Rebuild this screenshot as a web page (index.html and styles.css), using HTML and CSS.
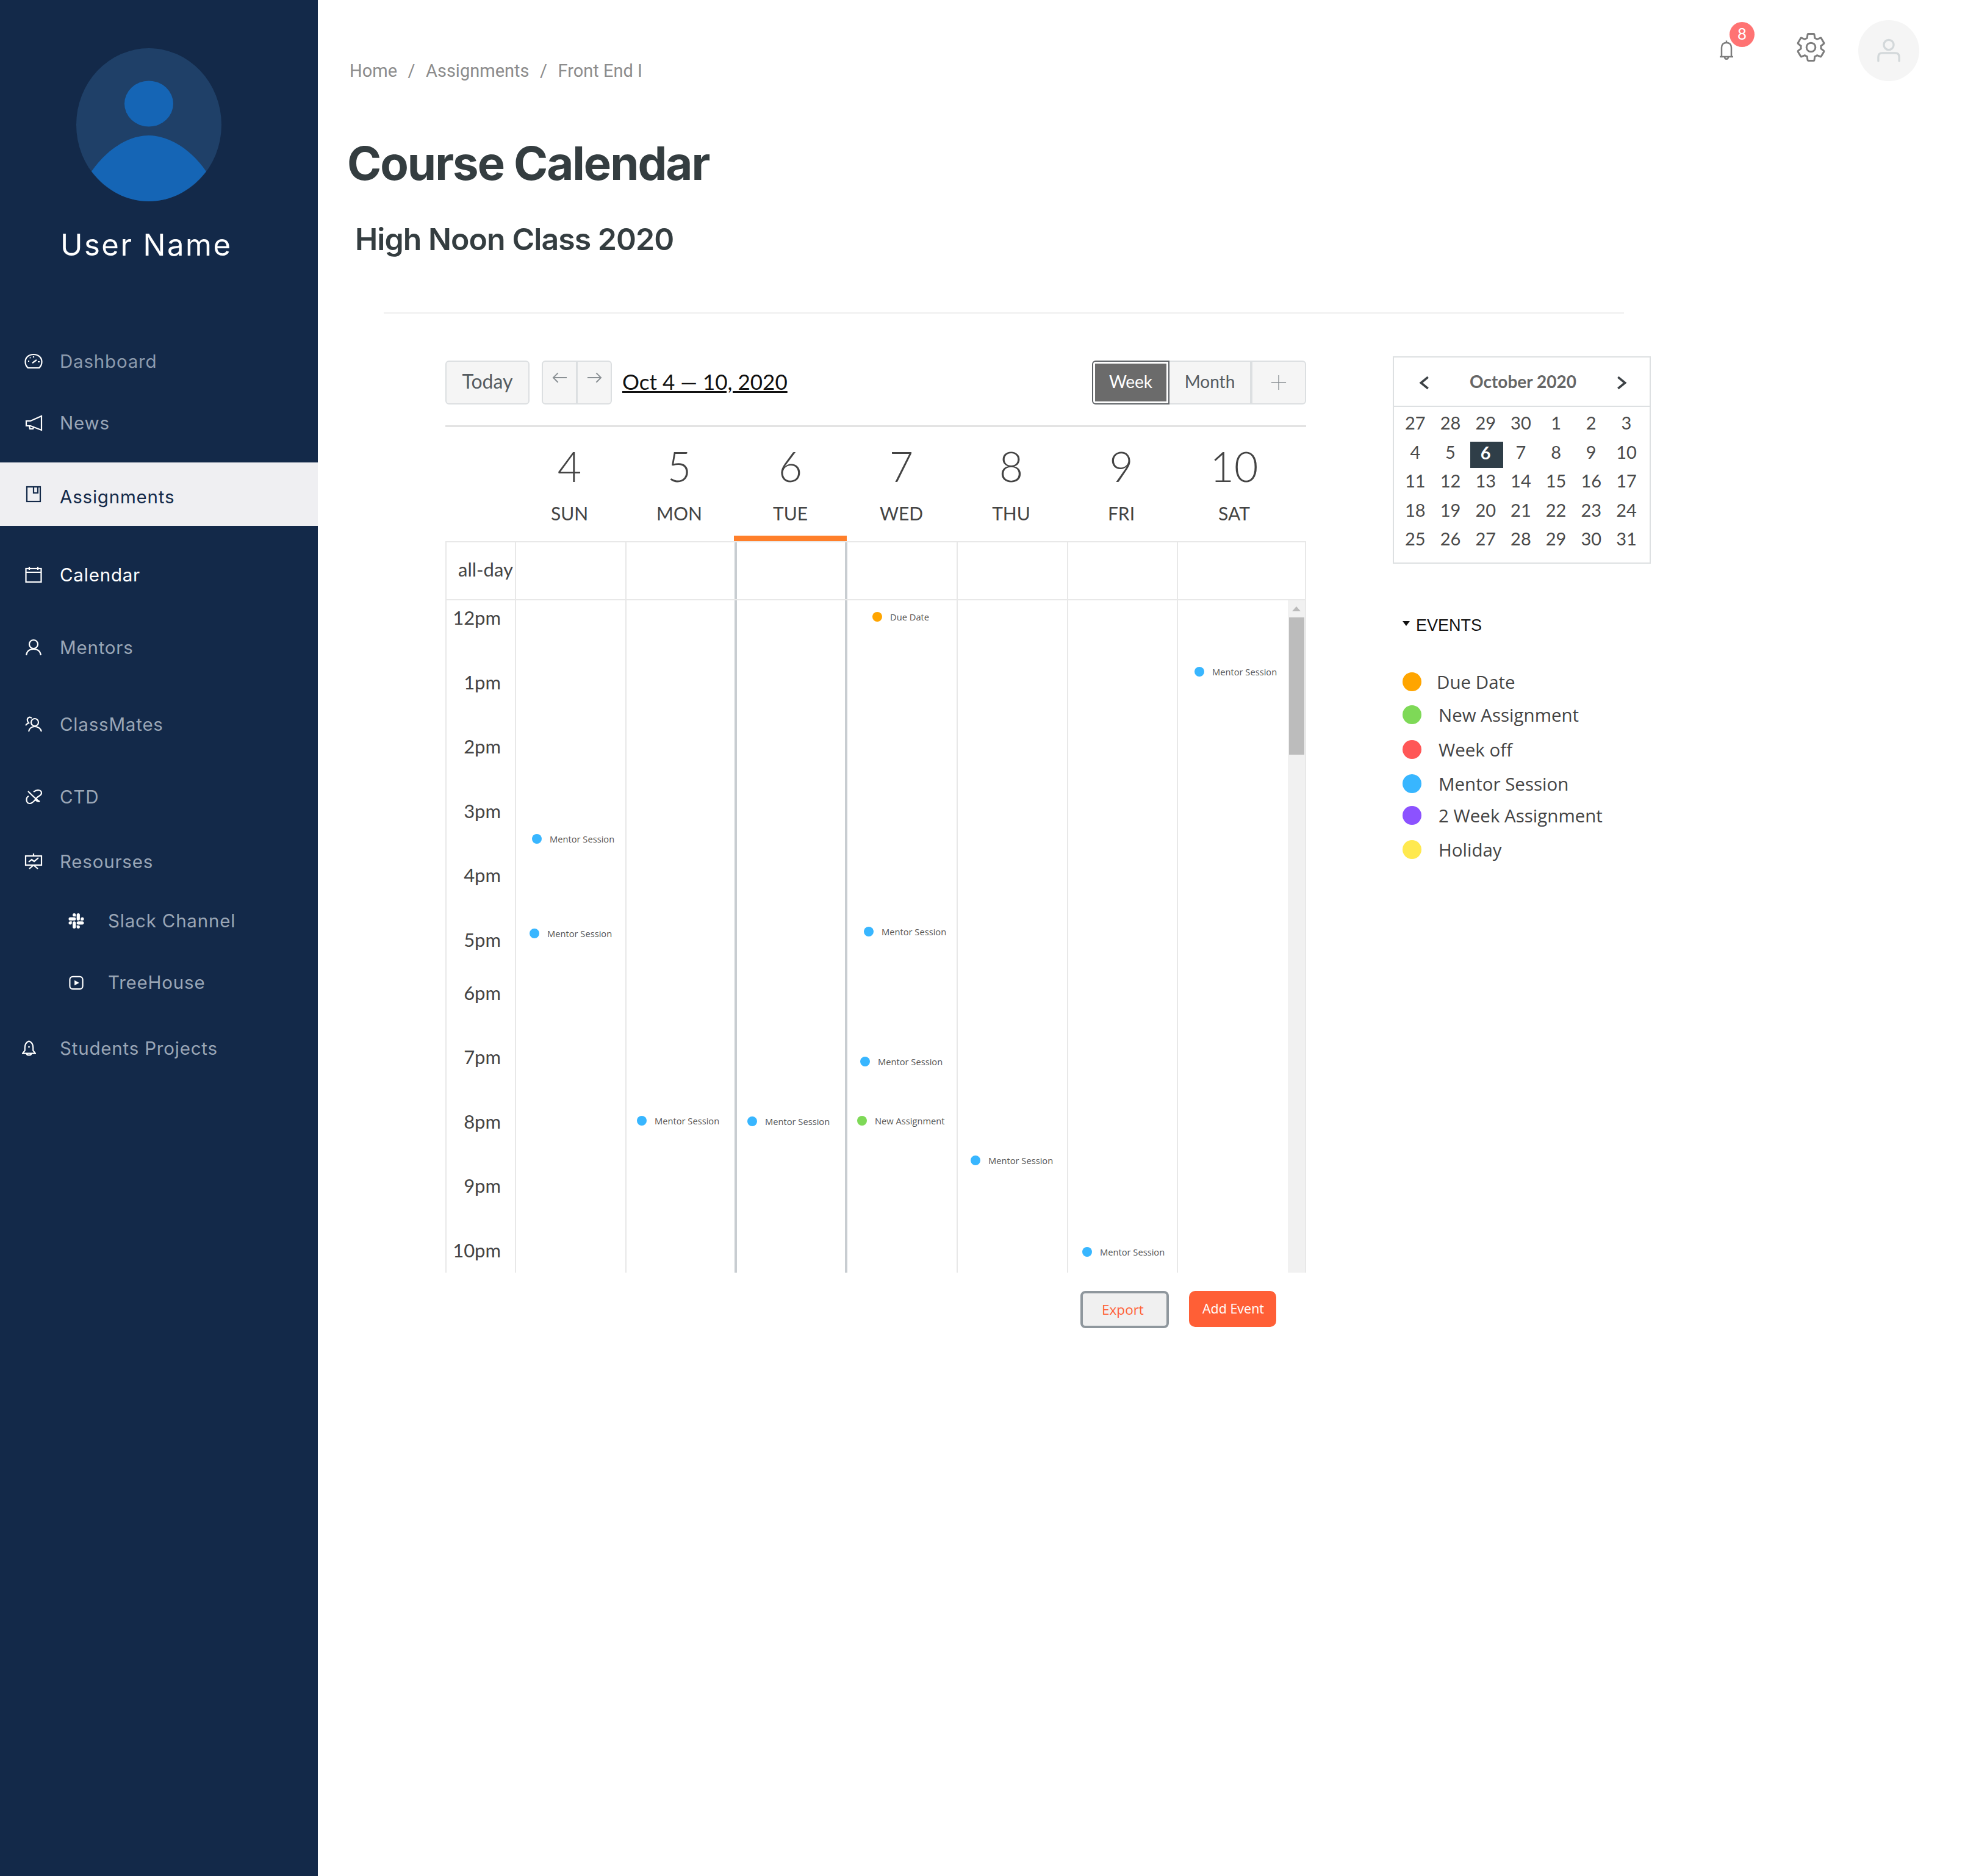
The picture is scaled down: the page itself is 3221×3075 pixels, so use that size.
FILE: index.html
```html
<!DOCTYPE html>
<html>
<head>
	<title>Course Calendar</title>
	<link rel="stylesheet" href="styles.css">
</head>
<body>
<div class="page">
	<aside class="sidebar">
		<svg class="avatar" viewBox="0 0 238 251">
			<ellipse cx="119" cy="125.5" rx="119" ry="125.5" fill="#1f4068"/>
			<ellipse cx="119" cy="91" rx="40" ry="37.5" fill="#1565b5"/>
			<path d="M25 202 C52 163 88 143 119 143 C150 143 186 163 213 202 C188 234 155 251 119 251 C83 251 50 234 25 202 Z" fill="#1565b5"/>
		</svg>
		<div class="user-name">User Name</div>
		<nav class="nav">
			<a class="nav-item nav-dim">
				<svg viewBox="0 0 30 28"><path d="M6 25 C2 22 1.500 18 1.500 15 C1.500 8 7 3 15 3 C23 3 28.500 8 28.500 15 C28.500 18 28 22 24 25 Z"/><path d="M13 17 L20 12 M6 14 H8 M22 15 H25 M9 8 L10 9 M15 6 V8"/></svg>
				<span>Dashboard</span>
			</a>
			<a class="nav-item">
				<svg viewBox="0 0 30 28"><path d="M28 3 V26 L10 19 H3 V11 H10 Z"/><path d="M8 19 L9 24 H14 L15 21"/></svg>
				<span>News</span>
			</a>
			<a class="nav-item nav-active">
				<svg viewBox="0 0 30 28"><rect x="4" y="2" width="22" height="24"/><path d="M15 2 V12 H22 V2"/></svg>
				<span>Assignments</span>
			</a>
			<a class="nav-item nav-white">
				<svg viewBox="0 0 30 28"><rect x="2.500" y="4" width="25" height="22"/><path d="M2.500 10 H27.500 M8 1 V6 M22 1 V6"/></svg>
				<span>Calendar</span>
			</a>
			<a class="nav-item">
				<svg viewBox="0 0 30 28"><circle cx="15" cy="9" r="7"/><path d="M3 27 C4 20 9 17 15 17 C21 17 26 20 27 27"/></svg>
				<span>Mentors</span>
			</a>
			<a class="nav-item">
				<svg viewBox="0 0 30 28"><circle cx="17" cy="11" r="6"/><path d="M7 26 C8 21 12 18 17 18 C22 18 27 21 28 26"/><path d="M12 4 C8 1 4 4 5 8 C5 10 6 11 7 12 C5 13 3 14 2 16"/></svg>
				<span>ClassMates</span>
			</a>
			<a class="nav-item">
				<svg viewBox="0 0 30 28"><path d="M7 13 C2 15 2 25 9 25 C14 25 17 19 21 15 C24 12 28 12 28 8 C28 2 20 2 15 6"/><path d="M6 5 C10 9 20 19 25 22"/><path d="M25 22 C22 22 20 21 18 19"/></svg>
				<span>CTD</span>
			</a>
			<a class="nav-item">
				<svg viewBox="0 0 30 28"><rect x="2" y="5" width="26" height="15"/><path d="M15 1 V5 M15 20 L8 26 M15 20 L22 26 M7 15 L12 11 L16 14 L23 8"/></svg>
				<span>Resourses</span>
			</a>
			<a class="nav-item nav-sub">
				<svg viewBox="0 0 24 24"><path class="solid" d="M5.042 15.165a2.528 2.528 0 0 1-2.52 2.523A2.528 2.528 0 0 1 0 15.165a2.527 2.527 0 0 1 2.522-2.52h2.52v2.52zM6.313 15.165a2.527 2.527 0 0 1 2.521-2.52 2.527 2.527 0 0 1 2.521 2.52v6.313A2.528 2.528 0 0 1 8.834 24a2.528 2.528 0 0 1-2.521-2.522v-6.313zM8.834 5.042a2.528 2.528 0 0 1-2.521-2.52A2.528 2.528 0 0 1 8.834 0a2.528 2.528 0 0 1 2.521 2.522v2.52H8.834zM8.834 6.313a2.528 2.528 0 0 1 2.521 2.521 2.528 2.528 0 0 1-2.521 2.521H2.522A2.528 2.528 0 0 1 0 8.834a2.528 2.528 0 0 1 2.522-2.521h6.312zM18.956 8.834a2.528 2.528 0 0 1 2.522-2.521A2.528 2.528 0 0 1 24 8.834a2.528 2.528 0 0 1-2.522 2.521h-2.522V8.834zM17.688 8.834a2.528 2.528 0 0 1-2.523 2.521 2.527 2.527 0 0 1-2.52-2.521V2.522A2.527 2.527 0 0 1 15.165 0a2.528 2.528 0 0 1 2.523 2.522v6.312zM15.165 18.956a2.528 2.528 0 0 1 2.523 2.522A2.528 2.528 0 0 1 15.165 24a2.527 2.527 0 0 1-2.52-2.522v-2.522h2.52zM15.165 17.688a2.527 2.527 0 0 1-2.52-2.523 2.526 2.526 0 0 1 2.52-2.52h6.313A2.527 2.527 0 0 1 24 15.165a2.528 2.528 0 0 1-2.522 2.523h-6.313z"/></svg>
				<span>Slack Channel</span>
			</a>
			<a class="nav-item nav-sub">
				<svg viewBox="0 0 26 26"><rect x="2" y="3" width="22" height="21" rx="5"/><path class="solid" d="M10 9 L18 13.500 L10 18 Z"/></svg>
				<span>TreeHouse</span>
			</a>
			<a class="nav-item nav-far">
				<svg viewBox="0 0 24 28"><path d="M12 2 C7 4 5 8 5 13 V18 L1 23 H23 L19 18 V13 C19 8 17 4 12 2 Z"/><circle class="solid" cx="12" cy="12" r="1.500"/><path d="M8 23 C8 27 16 27 16 23"/></svg>
				<span>Students Projects</span>
			</a>
		</nav>
	</aside>

	<main class="main">
		<header class="topbar">
			<div class="breadcrumb">
				<span>Home</span><span class="crumb-sep">/</span><span>Assignments</span><span class="crumb-sep">/</span><span>Front End I</span>
			</div>
			<div class="top-actions">
				<div class="bell">
					<svg viewBox="0 0 26 34"><path d="M2 28 H24 M5 28 V13 C5 8 8 5 13 5 C18 5 21 8 21 13 V28 M13 1.500 V5 M10 28 C10 33 16 33 16 28"/></svg>
					<span class="badge">8</span>
				</div>
				<svg class="gear" viewBox="0 0 24 24"><path d="M19.140 12.940c.04-.3.06-.61.06-.94 0-.32-.02-.64-.07-.94l2.030-1.580c.18-.14.23-.41.12-.61l-1.920-3.320c-.12-.22-.37-.29-.59-.22l-2.390.96c-.5-.38-1.030-.7-1.620-.94l-.36-2.540c-.04-.24-.24-.41-.48-.41h-3.840c-.24 0-.43.17-.47.41l-.36 2.540c-.59.24-1.130.57-1.620.94l-2.390-.96c-.22-.08-.47 0-.59.22L2.740 8.870c-.12.21-.08.47.12.61l2.030 1.580c-.05.3-.09.63-.09.94s.02.64.07.94l-2.030 1.580c-.18.14-.23.41-.12.61l1.920 3.320c.12.22.37.29.59.22l2.390-.96c.5.38 1.030.7 1.620.94l.36 2.540c.05.24.24.41.48.41h3.840c.24 0 .44-.17.47-.41l.36-2.540c.59-.24 1.130-.56 1.620-.94l2.390.96c.22.08.47 0 .59-.22l1.920-3.320c.12-.22.07-.47-.12-.61l-2.010-1.580z"/><circle cx="12" cy="12" r="3.200"/></svg>
				<div class="top-avatar">
					<svg viewBox="0 0 40 40"><circle cx="20" cy="10" r="8.500"/><path d="M2 38 V31 C2 26 5 24 9 24 H31 C35 24 38 26 38 31 V38"/></svg>
				</div>
			</div>
		</header>

		<h1 class="page-title">Course Calendar</h1>
		<h2 class="page-subtitle">High Noon Class 2020</h2>
		<hr class="divider">

		<section class="content">
			<div class="calendar">
				<div class="cal-toolbar">
					<button class="btn btn-today">Today</button>
					<div class="btn-group btn-arrows">
						<button class="btn"><svg viewBox="0 0 26 22"><path d="M25 10 H2 M10 2 L2 10 L10 18"/></svg></button>
						<button class="btn"><svg viewBox="0 0 26 22"><path d="M1 10 H24 M16 2 L24 10 L16 18"/></svg></button>
					</div>
					<a class="cal-range">Oct 4 — 10, 2020</a>
					<div class="btn-group btn-views">
						<button class="btn btn-week"><span>Week</span></button>
						<button class="btn btn-month">Month</button>
						<button class="btn btn-plus"><svg viewBox="0 0 28 28"><path d="M14 1 V27 M1 14 H27"/></svg></button>
					</div>
				</div>

				<div class="cal-head">
					<div></div>
					<div class="day-head"><div class="day-num">4</div><div class="day-name">SUN</div></div>
					<div class="day-head"><div class="day-num">5</div><div class="day-name">MON</div></div>
					<div class="day-head day-today"><div class="day-num">6</div><div class="day-name">TUE</div></div>
					<div class="day-head"><div class="day-num">7</div><div class="day-name">WED</div></div>
					<div class="day-head"><div class="day-num">8</div><div class="day-name">THU</div></div>
					<div class="day-head"><div class="day-num">9</div><div class="day-name">FRI</div></div>
					<div class="day-head day-last"><div class="day-num">10</div><div class="day-name">SAT</div></div>
				</div>

				<div class="all-day">
					<div class="all-day-label">all-day</div>
					<div class="cell"></div>
					<div class="cell"></div>
					<div class="cell cell-today"></div>
					<div class="cell cell-after"></div>
					<div class="cell"></div>
					<div class="cell"></div>
					<div class="cell"></div>
				</div>

				<div class="cal-body">
					<div class="times">
						<div class="time">12pm</div>
						<div class="time">1pm</div>
						<div class="time">2pm</div>
						<div class="time">3pm</div>
						<div class="time">4pm</div>
						<div class="time time-short">5pm</div>
						<div class="time">6pm</div>
						<div class="time">7pm</div>
						<div class="time">8pm</div>
						<div class="time">9pm</div>
						<div class="time">10pm</div>
					</div>
					<div class="cell">
						<div class="event" style="top: 381px; left: 26px"><i class="dot dot-blue"></i>Mentor Session</div>
						<div class="event" style="top: 536px; left: 22px"><i class="dot dot-blue"></i>Mentor Session</div>
					</div>
					<div class="cell">
						<div class="event" style="top: 843px; left: 17px"><i class="dot dot-blue"></i>Mentor Session</div>
					</div>
					<div class="cell cell-today">
						<div class="event" style="top: 844px; left: 17px"><i class="dot dot-blue"></i>Mentor Session</div>
					</div>
					<div class="cell cell-after">
						<div class="event" style="top: 17px; left: 41px"><i class="dot dot-orange"></i>Due Date</div>
						<div class="event" style="top: 533px; left: 27px"><i class="dot dot-blue"></i>Mentor Session</div>
						<div class="event" style="top: 746px; left: 21px"><i class="dot dot-blue"></i>Mentor Session</div>
						<div class="event" style="top: 843px; left: 16px"><i class="dot dot-green"></i>New Assignment</div>
					</div>
					<div class="cell">
						<div class="event" style="top: 908px; left: 21px"><i class="dot dot-blue"></i>Mentor Session</div>
					</div>
					<div class="cell">
						<div class="event" style="top: 1058px; left: 23px"><i class="dot dot-blue"></i>Mentor Session</div>
					</div>
					<div class="cell">
						<div class="event" style="top: 107px; left: 27px"><i class="dot dot-blue"></i>Mentor Session</div>
					</div>
					<div class="scrollbar">
						<div class="scroll-up"></div>
						<div class="scroll-thumb"></div>
					</div>
				</div>

				<div class="cal-actions">
					<button class="btn-export">Export</button>
					<button class="btn-add">Add Event</button>
				</div>
			</div>

			<div class="side">
				<div class="mini-cal">
					<div class="mini-head">
						<svg viewBox="0 0 18 24"><path d="M15 3 L4 12 L15 21"/></svg>
						<span>October 2020</span>
						<svg viewBox="0 0 18 24"><path d="M3 3 L14 12 L3 21"/></svg>
					</div>
					<div class="mini-grid">
						<span>27</span><span>28</span><span>29</span><span>30</span><span>1</span><span>2</span><span>3</span>
						<span>4</span><span>5</span><span class="mini-today">6</span><span>7</span><span>8</span><span>9</span><span>10</span>
						<span>11</span><span>12</span><span>13</span><span>14</span><span>15</span><span>16</span><span>17</span>
						<span>18</span><span>19</span><span>20</span><span>21</span><span>22</span><span>23</span><span>24</span>
						<span>25</span><span>26</span><span>27</span><span>28</span><span>29</span><span>30</span><span>31</span>
					</div>
				</div>
				<div class="events-title"><i class="caret"></i>EVENTS</div>
				<ul class="legend">
					<li><i class="dot dot-orange"></i>Due Date</li>
					<li><i class="dot dot-green"></i>New Assignment</li>
					<li><i class="dot dot-red"></i>Week off</li>
					<li><i class="dot dot-blue"></i>Mentor Session</li>
					<li><i class="dot dot-purple"></i>2 Week Assignment</li>
					<li><i class="dot dot-yellow"></i>Holiday</li>
				</ul>
			</div>
		</section>
	</main>
</div>
</body>
</html>
```

FILE: styles.css
```css
* {
	box-sizing: border-box;
}
body {
	margin: 0;
	background: #fff;
	font-family: "Lato", sans-serif;
	color: #444;
}
.page {
	display: flex;
	min-height: 3075px;
}

/* sidebar */
.sidebar {
	width: 521px;
	flex: none;
	background: #132949;
	padding-top: 79px;
}
.avatar {
	display: block;
	width: 238px;
	height: 251px;
	margin-left: 125px;
}
.user-name {
	margin: 42px 0 0 99px;
	font-family: "Inter", sans-serif;
	font-size: 49px;
	line-height: 60px;
	letter-spacing: 2.5px;
	color: #fff;
}
.nav {
	display: flex;
	flex-direction: column;
	margin-top: 130px;
}
.nav-item {
	display: flex;
	align-items: center;
	height: 60px;
	padding-left: 40px;
	font-family: "Inter", sans-serif;
	font-size: 29.500px;
	letter-spacing: .8px;
	color: #9aa6b6;
}
.nav-item svg {
	width: 30px;
	height: 28px;
	flex: none;
	margin-right: 28px;
	fill: none;
	stroke: #fff;
	stroke-width: 2.2;
}
.nav-item svg .solid {
	fill: #fff;
	stroke: none;
}
.nav-item:nth-child(2) { margin-top: 41px; }
.nav-item:nth-child(3) { margin-top: 35px; }
.nav-item:nth-child(4) { margin-top: 50px; }
.nav-item:nth-child(5) { margin-top: 59px; }
.nav-item:nth-child(6) { margin-top: 66px; }
.nav-item:nth-child(7) { margin-top: 59px; }
.nav-item:nth-child(8) { margin-top: 46px; }
.nav-item:nth-child(9) { margin-top: 37px; }
.nav-item:nth-child(10) { margin-top: 41px; }
.nav-item:nth-child(11) { margin-top: 48px; }
.nav-dim {
	color: #8d9bad;
}
.nav-active {
	height: 104px;
	padding-top: 8px;
	background: #efeff2;
	color: #132949;
}
.nav-active svg {
	stroke: #132949;
	margin-bottom: 8px;
}
.nav-white {
	color: #fff;
}
.nav-sub {
	padding-left: 112px;
}
.nav-sub svg {
	width: 26px;
	height: 25px;
	margin-right: 39px;
}
.nav-far {
	padding-left: 36px;
}
.nav-far svg {
	width: 23px;
	margin-right: 39px;
}

/* top */
.main {
	flex: 1;
	min-width: 0;
}
.topbar {
	display: flex;
	justify-content: space-between;
	align-items: flex-start;
	height: 133px;
	padding: 33px 75px 0 52px;
}
.breadcrumb {
	display: flex;
	margin-top: 64px;
	font-family: "Roboto", sans-serif;
	font-size: 29px;
	line-height: 38px;
	color: #8c8c8c;
}
.crumb-sep {
	margin: 0 17.500px;
}
.top-actions {
	display: flex;
	align-items: center;
}
.bell {
	position: relative;
	width: 26px;
	height: 34px;
	margin: -2px 98px 0 0;
}
.bell svg {
	display: block;
	width: 26px;
	height: 34px;
	fill: none;
	stroke: #7d7d7d;
	stroke-width: 2.5;
}
.badge {
	position: absolute;
	top: -29px;
	left: 18px;
	width: 41px;
	height: 41px;
	border-radius: 50%;
	background: #ff7373;
	color: #fff;
	font-family: "Inter", sans-serif;
	font-size: 25px;
	line-height: 41px;
	text-align: center;
}
.gear {
	width: 55px;
	height: 55px;
	margin: -12px 50px 0 0;
	fill: none;
	stroke: #7d7d7d;
	stroke-width: 1.300;
}
.top-avatar {
	display: flex;
	align-items: center;
	justify-content: center;
	width: 100px;
	height: 100px;
	border-radius: 50%;
	background: #f5f5f5;
}
.top-avatar svg {
	width: 38px;
	height: 44px;
	fill: none;
	stroke: #d3d8da;
	stroke-width: 3.500;
	stroke-linecap: round;
}
.page-title {
	margin: 89px 0 0 48px;
	font-family: "Inter", sans-serif;
	font-size: 76px;
	font-weight: 700;
	line-height: 90px;
	letter-spacing: -2px;
	color: #343d40;
}
.page-subtitle {
	margin: 50px 0 0 61px;
	font-family: "Inter", sans-serif;
	font-size: 50px;
	font-weight: 600;
	line-height: 60px;
	letter-spacing: -.95px;
	color: #343d40;
}
.divider {
	width: 2033px;
	height: 2px;
	margin: 90px 0 0 108px;
	border: 0;
	background: #eeeeee;
}

/* calendar */
.content {
	display: flex;
	align-items: flex-start;
	gap: 142px;
	margin: 70px 0 0 209px;
}
.calendar {
	width: 1411px;
	flex: none;
	padding-top: 7px;
}
.cal-toolbar {
	display: flex;
	align-items: center;
	padding-bottom: 34px;
	border-bottom: 3px solid #e3e3e3;
}
.btn {
	height: 72px;
	padding: 0 0 4px;
	background: #f5f5f5;
	border: 2px solid #dcdfe1;
	border-radius: 6px;
	font-family: "Lato", sans-serif;
	font-size: 29px;
	color: #555c61;
}
.btn-today {
	width: 138px;
	margin-right: 20px;
	padding-bottom: 6px;
	font-size: 32px;
}
.btn-group {
	display: flex;
}
.btn-arrows .btn {
	width: 58px;
	border-radius: 6px 0 0 6px;
}
.btn-arrows .btn + .btn {
	width: 58px;
	margin-left: -1px;
	border-radius: 0 6px 6px 0;
}
.btn-arrows svg {
	display: block;
	width: 25px;
	height: 22px;
	margin: -10px auto 0;
	fill: none;
	stroke: #8a9094;
	stroke-width: 2;
}
.cal-range {
	margin: -4px auto 0 17px;
	font-size: 35px;
	line-height: 44px;
	color: #111;
	text-decoration: underline;
}
.btn-week {
	width: 127px;
	padding: 3px;
	border-color: #5f6367;
	border-radius: 6px 0 0 6px;
	background: #fff;
	color: #fff;
}
.btn-week span {
	display: flex;
	align-items: center;
	justify-content: center;
	height: 100%;
	padding-bottom: 4px;
	background: #6b6b6b;
	font-size: 28px;
}
.btn-month {
	width: 134px;
	border-left: 0;
	border-radius: 0;
	font-size: 28px;
}
.btn-plus {
	width: 90px;
	padding: 0;
	border-left: 2px solid #dcdfe1;
	border-radius: 0 6px 6px 0;
}
.btn-plus svg {
	display: block;
	width: 26px;
	height: 26px;
	margin: 0 auto;
	fill: none;
	stroke: #8a9094;
	stroke-width: 1.500;
}
.cal-head,
.all-day {
	display: grid;
	grid-template-columns: 112px 181px 179px 185px 179px 181px 180px 210px;
}
.cal-head {
	grid-template-columns: 114px 181px 179px 185px 179px 181px 180px 212px;
	margin-left: -1px;
	height: 187px;
}
.day-head {
	display: flex;
	flex-direction: column;
	align-items: center;
	padding-top: 24px;
	border-bottom: 9px solid transparent;
}
.day-today {
	border-bottom-color: #ff7f2a;
}
.day-last {
	padding-right: 22px;
}
.day-num {
	font-size: 68px;
	font-weight: 300;
	line-height: 80px;
	color: #444;
}
.day-name {
	margin-top: 17px;
	font-size: 30px;
	line-height: 40px;
	color: #444;
}
.all-day {
	height: 97px;
	border: 2px solid #e8e8e8;
}
.all-day-label {
	padding-left: 19px;
	font-size: 31px;
	line-height: 88px;
	color: #444;
}
.cell {
	position: relative;
	border-left: 2px solid #e8e8e8;
}
.cell-today {
	border-left: 4px solid #c8cdd1;
	border-right: 4px solid #c8cdd1;
}
.cell-after {
	border-left: 0;
}
.cal-body {
	display: grid;
	grid-template-columns: 112px 181px 179px 185px 179px 181px 180px 182px 30px;
	height: 1102px;
	border-left: 2px solid #e8e8e8;
	overflow: hidden;
}
.times {
	padding: 8px 23px 0 0;
}
.time {
	height: 105.500px;
	font-size: 31px;
	line-height: 40px;
	text-align: right;
	color: #444;
}
.time-short {
	height: 87px;
}
.event {
	position: absolute;
	display: flex;
	align-items: center;
	height: 20px;
	font-family: "Open Sans", sans-serif;
	font-size: 14.700px;
	white-space: nowrap;
	color: #555;
}
.dot {
	display: block;
	flex: none;
	border-radius: 50%;
}
.event .dot {
	width: 16px;
	height: 16px;
	margin-right: 13px;
}
.dot-orange { background: #ffa500; }
.dot-green { background: #7ed957; }
.dot-red { background: #ff5757; }
.dot-blue { background: #38b6ff; }
.dot-purple { background: #8c52ff; }
.dot-yellow { background: #ffe94f; }
.scrollbar {
	background: #f1f1f1;
	border-right: 2px solid #e8e8e8;
}
.scroll-up {
	width: 0;
	margin: 10px auto 0;
	border: 7px solid transparent;
	border-top: 0;
	border-bottom: 8px solid #bbb;
}
.scroll-thumb {
	height: 225px;
	margin: 10px 1px 0 2px;
	background: #bcbcbc;
}
.cal-actions {
	display: flex;
	justify-content: flex-end;
	align-items: flex-start;
	gap: 33px;
	margin-top: 30px;
	padding-right: 49px;
}
.btn-export {
	width: 145px;
	height: 61px;
	padding: 0 6px 0 0;
	background: #f0f0f0;
	border: 4px solid #8f979d;
	border-radius: 8px;
	font-family: "Open Sans", sans-serif;
	font-size: 22.500px;
	color: #ff5f36;
}
.btn-add {
	width: 143px;
	height: 59px;
	padding: 0 0 2px 2px;
	background: #ff5f36;
	border: 0;
	border-radius: 10px;
	font-family: "Open Sans", sans-serif;
	font-size: 21.500px;
	color: #fff;
}

/* right column */
.side {
	width: 423px;
	flex: none;
}
.mini-cal {
	height: 340px;
	border: 2px solid #dde0e2;
}
.mini-head {
	display: flex;
	align-items: center;
	justify-content: space-between;
	height: 81px;
	padding: 0 36px 2px 40px;
	border-bottom: 2px solid #dde0e2;
	font-size: 28px;
	font-weight: 700;
	color: #666;
}
.mini-head svg {
	width: 19px;
	height: 25px;
	margin-top: 6px;
	fill: none;
	stroke: #3d4246;
	stroke-width: 3.500;
}
.mini-grid {
	display: grid;
	grid-template-columns: repeat(7, 57.700px);
	grid-auto-rows: 47.500px;
	padding: 2px 0 0 6px;
	font-size: 29px;
	line-height: 47px;
	text-align: center;
	color: #4a4a4a;
}
.mini-today {
	height: 43px;
	margin: 7px 0 0 4px;
	padding-right: 4px;
	line-height: 36px;
	background: #2f3e48;
	font-weight: 700;
	color: #fff;
}
.events-title {
	display: flex;
	align-items: center;
	margin: 85px 0 0 16px;
	font-family: "Liberation Sans", sans-serif;
	font-size: 27px;
	line-height: 32px;
	color: #111;
}
.caret {
	width: 0;
	margin: -6px 10px 0 0;
	border: 6px solid transparent;
	border-bottom: 0;
	border-top: 8px solid #111;
}
.legend {
	margin: 61px 0 0 16px;
	padding: 0;
	list-style: none;
	font-family: "Open Sans", sans-serif;
	font-size: 29.500px;
	color: #444;
}
.legend li {
	display: flex;
	align-items: center;
	height: 30px;
	white-space: nowrap;
}
.legend .dot {
	width: 31px;
	height: 31px;
	margin-right: 28px;
}
.legend li:first-child .dot { margin-right: 25px; }
.legend li:nth-child(2) { margin-top: 24px; }
.legend li:nth-child(3) { margin-top: 27px; }
.legend li:nth-child(4) { margin-top: 26px; }
.legend li:nth-child(5) { margin-top: 22px; }
.legend li:nth-child(6) { margin-top: 26px; }
```
